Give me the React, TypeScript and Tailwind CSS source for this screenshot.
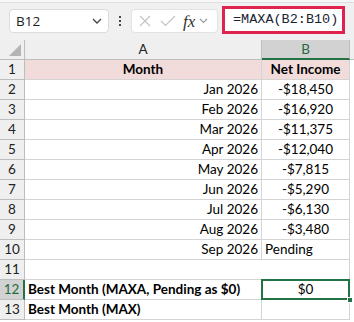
import React from "react";

const rows: [string, string, string][] = [
  ["Jan 2026", "-$18,450", "c"],
  ["Feb 2026", "-$16,920", "c"],
  ["Mar 2026", "-$11,375", "c"],
  ["Apr 2026", "-$12,040", "c"],
  ["May 2026", "-$7,815", "c"],
  ["Jun 2026", "-$5,290", "c"],
  ["Jul 2026", "-$6,130", "c"],
  ["Aug 2026", "-$3,480", "c"],
  ["Sep 2026", "Pending", "l"],
];

const cellFont = { fontFamily: "Lato, 'Liberation Sans', sans-serif" };

function RowHead({ n, selected }: { n: number; selected?: boolean }) {
  return (
    <div
      className={
        selected
          ? "h-[20px] flex items-center justify-center bg-[#d2d2d2] text-[#1e6b3f] border-b border-[#bdbdbd] border-r-2 border-r-[#217346] text-[13.5px]"
          : "h-[20px] flex items-center justify-center bg-[#efefef] text-[#222] border-b border-r border-[#bdbdbd] text-[13.5px]"
      }
    >
      {n}
    </div>
  );
}

export default function App() {
  return (
    <div className="w-[354px] h-[322px] overflow-hidden bg-white" style={cellFont}>
      {/* Toolbar */}
      <div className="h-[40px] bg-[#f0f0f0] flex flex-col">
        <div className="h-[3px] bg-[#f7f7f7] border-b border-[#dedede]" />
        <div className="flex items-center pt-[5px]">
          <div className="ml-[9px] w-[100px] h-[24px] bg-white rounded-[4px] border border-[#dcdcdc] flex items-center justify-between pl-[6px] pr-[6px]">
            <span className="text-[13.5px] text-[#222]" style={{ fontFamily: "'Open Sans', 'Liberation Sans', sans-serif" }}>B12</span>
            <svg width="10" height="6" viewBox="0 0 10 6">
              <path d="M1 1 L5 5 L9 1" fill="none" stroke="#444" strokeWidth="1.3" />
            </svg>
          </div>
          <div className="w-[22px] flex flex-col items-center justify-center gap-[2px]">
            <div className="w-[2px] h-[2px] bg-[#444]" />
            <div className="w-[2px] h-[2px] bg-[#444]" />
            <div className="w-[2px] h-[2px] bg-[#444]" />
          </div>
          <div className="w-[87px] h-[24px] bg-white rounded-[4px] border border-[#e2e2e2] flex items-center pl-[6px]">
            <svg width="14" height="14" viewBox="0 0 14 14">
              <path d="M2 2 L12 12 M12 2 L2 12" stroke="#c4c4c4" strokeWidth="1.2" />
            </svg>
            <svg width="16" height="14" viewBox="0 0 16 14" className="ml-[8px]">
              <path d="M1 7 L5.5 11.5 L15 2" fill="none" stroke="#c4c4c4" strokeWidth="1.2" />
            </svg>
            <span className="ml-[7px] text-[17px] italic text-[#333] leading-none" style={{ fontFamily: "'Liberation Serif', serif" }}>fx</span>
            <svg width="9" height="6" viewBox="0 0 9 6" className="ml-[4px]">
              <path d="M1 1 L4.5 4.5 L8 1" fill="none" stroke="#999" strokeWidth="1.1" />
            </svg>
          </div>
          <div className="ml-[4px] w-[123px] h-[28px] -mt-[2px] border-[3px] border-[#e0234e] bg-white flex items-center pl-[8px]">
            <span className="text-[13.5px] text-[#1b2433]" style={{ fontFamily: "'Liberation Mono', monospace" }}>=MAXA(B2:B10)</span>
          </div>
        </div>
      </div>

      {/* Grid */}
      <div className="grid grid-cols-[25px_237px_88px_4px] text-[13.5px] text-black">
        {/* Header row */}
        <div className="h-[20px] bg-[#efefef] border-r border-b border-[#bdbdbd] relative overflow-hidden">
          <div
            className="absolute right-[3px] bottom-[3px] w-[12px] h-[12px] bg-[#b4b4b4]"
            style={{ clipPath: "polygon(100% 0, 100% 100%, 0 100%)" }}
          />
        </div>
        <div className="h-[20px] bg-[#efefef] border-r border-b border-[#bdbdbd] flex items-center justify-center text-[#222]">A</div>
        <div className="h-[20px] bg-[#d2d2d2] border-r border-[#bdbdbd] border-b-2 border-b-[#217346] flex items-center justify-center text-[#1e6b3f]">B</div>
        <div className="h-[20px] bg-[#efefef] border-b border-[#bdbdbd]" />

        {/* Row 1 */}
        <RowHead n={1} />
        <div className="h-[20px] bg-[#f2dcdb] border-r border-b border-[#d4d4d4] flex items-center justify-center font-bold">Month</div>
        <div className="h-[20px] bg-[#f2dcdb] border-r border-b border-[#d4d4d4] flex items-center justify-center font-bold">Net Income</div>
        <div className="h-[20px]" />

        {rows.map(([m, v, a], i) => (
          <React.Fragment key={m}>
            <RowHead n={i + 2} />
            <div className="h-[20px] border-r border-b border-[#d4d4d4] flex items-center justify-end pr-[3px]">{m}</div>
            <div
              className={
                a === "c"
                  ? "h-[20px] border-r border-b border-[#d4d4d4] flex items-center justify-center"
                  : "h-[20px] border-r border-b border-[#d4d4d4] flex items-center pl-[3px]"
              }
            >
              {v}
            </div>
            <div className="h-[20px]" />
          </React.Fragment>
        ))}

        {/* Row 11 */}
        <RowHead n={11} />
        <div className="h-[20px] border-b border-[#d4d4d4]" />
        <div className="h-[20px] border-r border-b border-[#d4d4d4]" />
        <div className="h-[20px]" />

        {/* Row 12 */}
        <RowHead n={12} selected />
        <div className="h-[20px] border-r border-b border-[#d4d4d4] flex items-center pl-[3px] font-bold whitespace-nowrap">Best Month (MAXA, Pending as $0)</div>
        <div className="h-[20px] border-r border-b border-[#d4d4d4] flex items-center justify-center relative">
          $0
          <div className="absolute -left-[1px] -top-[1px] -right-[1px] -bottom-[1px] border-2 border-[#217346]" />
          <div className="absolute -right-[4px] -bottom-[4px] w-[6px] h-[6px] bg-[#217346] border border-white" />
        </div>
        <div className="h-[20px]" />

        {/* Row 13 */}
        <RowHead n={13} />
        <div className="h-[20px] border-r border-b border-[#d4d4d4] flex items-center pl-[3px] font-bold">Best Month (MAX)</div>
        <div className="h-[20px] border-r border-b border-[#d4d4d4]" />
        <div className="h-[20px]" />
      </div>
    </div>
  );
}
